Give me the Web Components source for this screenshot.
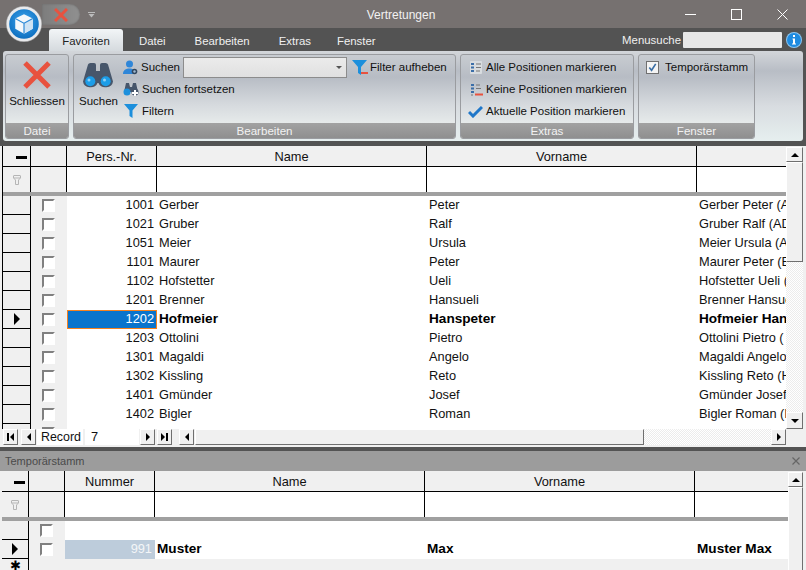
<!DOCTYPE html>
<html>
<head>
<meta charset="utf-8">
<title>Vertretungen</title>
<style>
  html, body { margin: 0; height: 100%; overflow: hidden; background: #535353; }
  body { font: 11.4px 'Liberation Sans', sans-serif; color: #111; }
</style>
</head>
<body>
<app-window>
  <title-bar slot="top"></title-bar>
  <ribbon-tabs slot="top"></ribbon-tabs>
  <ribbon-bar slot="top"></ribbon-bar>
  <data-grid id="main" indicator="28" check="36" first="90" first-title="Pers.-Nr." tail="89" bar="17"></data-grid>
  <sub-panel caption="Temporärstamm">
    <data-grid id="temp" indicator="27" check="36" first="90" first-title="Nummer" tail="93" bar="15" no-nav></data-grid>
  </sub-panel>
</app-window>

<script>
/**
 * Small helper, creates a component from a template string.
 */
const define = (name, html, Base = HTMLElement) => {
  const template = document.createElement('template')
  template.innerHTML = html
  customElements.define(name, class extends Base {
    constructor () {
      super()
      this.attachShadow({ mode: 'open' }).appendChild(template.content.cloneNode(true))
    }
  })
}

define('app-window', `
  <style>
    :host { display: flex; flex-direction: column; width: 806px; height: 570px; overflow: hidden; background: #f0f0f0; }
    .top { flex: none; background: #535353; }
  </style>
  <div class="top"><slot name="top"></slot></div>
  <slot></slot>
`)

define('title-bar', `
  <style>
    :host { display: flex; align-items: flex-start; height: 28px; background: #767170; color: #fff; position: relative; font-size: 12px; }
    .orb { position: absolute; left: 6px; top: 6px; z-index: 2; }
    .pill { width: 38px; height: 21px; margin: 4px 0 0 42px; background: linear-gradient(90deg, #7d7d7d, #909090); border-radius: 0 11px 11px 0; display: flex; align-items: center; justify-content: center; box-shadow: inset 0 0 2px #666; }
    .more { margin: 12px 0 0 8px; width: 7px; display: flex; }
    .cap { position: absolute; left: 0; width: 802px; top: 8px; text-align: center; color: #f2f2f2; }
    .ctl { position: absolute; right: 1px; top: 0; display: flex; }
    .ctl span { width: 46px; height: 28px; display: flex; align-items: center; justify-content: center; }
  </style>
  <svg class="orb" width="36" height="36" viewBox="0 0 37 37">
    <defs><radialGradient id="b" cx=".5" cy=".4" r=".6"><stop offset="0" stop-color="#3fa6ee"/><stop offset="1" stop-color="#0d6fc0"/></radialGradient></defs>
    <circle cx="18.500" cy="18.500" r="18.300" fill="#e9eaec" stroke="#8a8a8a" stroke-width=".5"/>
    <circle cx="18.500" cy="18.500" r="15.200" fill="url(#b)"/>
    <path d="M18.500 8.500l9 4.400v10.600l-9 5-9-5V12.900z" fill="#f4f8fb"/>
    <path d="M18.500 17.800l9-4.900v10.600l-9 5z" fill="#cfe3f3"/>
    <path d="M9.500 12.900l9 4.900v10.700M18.500 17.800l9-4.900" fill="none" stroke="#2e8ad6" stroke-width="1.200"/>
  </svg>
  <div class="pill">
    <svg width="14" height="14" viewBox="0 0 14 14"><path d="M1 1l12 12M13 1L1 13" stroke="#e8523f" stroke-width="3"/></svg>
  </div>
  <div class="more">
    <svg width="7" height="6" viewBox="0 0 7 6"><path d="M0 .5h7" stroke="#bbb"/><path d="M.5 2h6L3.500 5.500z" fill="#bbb"/></svg>
  </div>
  <div class="cap">Vertretungen</div>
  <div class="ctl">
    <span><svg width="11" height="11"><path d="M0 5.500h11" stroke="#fff"/></svg></span>
    <span><svg width="11" height="11"><rect x=".5" y=".5" width="10" height="10" fill="none" stroke="#fff"/></svg></span>
    <span><svg width="11" height="11"><path d="M.5.500l10 10M10.500.500l-10 10" stroke="#fff"/></svg></span>
  </div>
`)

define('ribbon-tabs', `
  <style>
    :host { display: flex; align-items: flex-end; height: 23px; background: #535353; color: #f0f0f0; padding-left: 49px; }
    .tab { width: 74px; height: 22px; line-height: 24px; text-align: center; color: #222; margin-right: 16px; background: linear-gradient(#f2f5f7, #d5dade); border-radius: 3px 3px 0 0; }
    .plain { margin-right: 29px; line-height: 26px; height: 23px; }
    .plain.tight { margin-right: 26px; }
    .right { margin-left: auto; display: flex; align-items: center; height: 23px; margin-right: 4px; }
    .find { width: 99px; height: 16px; margin: 0 4px 0 2px; background: #e8e8e8; border-radius: 1px; }
  </style>
  <div class="tab">Favoriten</div>
  <div class="plain">Datei</div>
  <div class="plain">Bearbeiten</div>
  <div class="plain tight">Extras</div>
  <div class="plain">Fenster</div>
  <div class="right">
    Menusuche<div class="find"></div>
    <svg width="16" height="16" viewBox="0 0 16 16"><circle cx="8" cy="8" r="8" fill="#8cc7f2"/><circle cx="8" cy="8" r="7" fill="#1f8be0"/><rect x="7" y="3" width="2" height="2" fill="#fff"/><path d="M6.500 6.500H9v5h1v1H6v-1h1v-4h-.5z" fill="#fff"/></svg>
  </div>
`)

define('ribbon-group', `
  <style>
    :host { display: flex; flex-direction: column; flex: none; box-sizing: border-box; height: 85px; border: 1px solid #9a9ca0; border-radius: 3px; overflow: hidden; margin-right: 4px; background: linear-gradient(#c8ccd1 0, #b7bcc4 22px, #d6dade 50px, #e6eaea 68px); }
    .body { flex: 1; display: flex; min-height: 0; }
    .foot { flex: none; height: 15px; line-height: 15px; text-align: center; color: #f2f2f2; background: linear-gradient(#a2a2a2, #8f8f8f); font-size: 11.600px; }
  </style>
  <div class="body"><slot></slot></div>
  <div class="foot"><slot name="foot"></slot></div>
`)

define('ribbon-bar', `
  <style>
    :host { display: block; height: 95px; font-size: 11.500px; }
    .bar { display: flex; height: 90px; box-sizing: border-box; margin: 0 3px 5px 3px; padding: 3px 0 0 2px; border-radius: 3px; background: linear-gradient(#d3d6da 0, #b8bdc5 20px, #d8dce0 55px, #e6efef 90px); }
    .big { display: flex; flex-direction: column; align-items: center; text-align: center; justify-content: flex-end; padding-bottom: 16px; }
    .row { display: flex; align-items: center; height: 22px; white-space: nowrap; }
    .col { display: flex; flex-direction: column; padding-top: 1px; }
    .row svg { flex: none; }
    .label { width: 42px; }
    .combo { width: 164px; height: 21px; box-sizing: border-box; border: 1px solid #8c8c8c; background: linear-gradient(#ebebeb, #e0e0e0); display: flex; justify-content: flex-end; align-items: center; padding-right: 4px; }
    .combo i { border: 3px solid transparent; border-top: 3px solid #555; border-bottom: 0; }
    .check { width: 13px; height: 13px; box-sizing: border-box; border: 1px solid #707070; background: #f4f4f4; margin-right: 6px; display: flex; }
  </style>
  <div class="bar">
    <ribbon-group style="width:64px">
      <div class="big" style="width:62px">
        <svg width="30" height="30" viewBox="0 0 30 30" style="margin-bottom:5px"><path d="M3 3l24 24M27 3L3 27" stroke="#e8523f" stroke-width="5"/></svg>
        Schliessen
      </div>
      <span slot="foot">Datei</span>
    </ribbon-group>
    <ribbon-group style="width:383px">
      <div class="big" style="width:49px">
        <svg width="30" height="25" viewBox="0 0 30 25" style="margin:0 2px 7px 0">
          <path d="M5 1.500Q5.500 0 7.500 0H11Q13 0 13 2V8H17V2Q17 0 19 0H22.500Q24.500 0 25 1.500L30 18.500A7.500 6.500 0 0 1 15.500 20H14.500A7.500 6.500 0 0 1 0 18.500Z" fill="#47566b"/>
          <circle cx="7.300" cy="18.300" r="5" fill="#1c9de8"/><circle cx="22.700" cy="18.300" r="5" fill="#1c9de8"/>
          <circle cx="6" cy="17" r="1.500" fill="#8fd0f6"/><circle cx="21.500" cy="17" r="1.500" fill="#8fd0f6"/>
        </svg>
        Suchen
      </div>
      <div class="col">
        <div class="row">
          <svg width="15" height="15" viewBox="0 0 15 15" style="margin-right:3px"><circle cx="6.500" cy="4" r="3.500" fill="#2f86d8"/><path d="M0 14c0-4 3-5.500 6.500-5.500S12 10 12 14z" fill="#2f86d8"/><circle cx="11.500" cy="11.500" r="2.800" fill="#33485f"/><circle cx="11.500" cy="11.500" r="1.200" fill="#9fb8cf"/></svg>
          <span class="label">Suchen</span>
          <div class="combo"><i></i></div>
        </div>
        <div class="row">
          <svg width="16" height="15" viewBox="0 0 16 15" style="margin-right:3px"><path d="M3 1h3l1 4h2l1-4h3l2 9H1z" fill="#47566b"/><circle cx="4" cy="10" r="3.500" fill="#1c8fdc"/><circle cx="12" cy="10" r="3.500" fill="#47566b"/><path d="M12 8v6M9 11h6" stroke="#fff" stroke-width="2"/></svg>Suchen fortsetzen
        </div>
        <div class="row">
          <svg width="16" height="16" viewBox="0 0 16 16" style="margin-right:3px"><path d="M1 1h14L9.500 7.500V15l-3-2V7.500z" fill="#1c8fdc"/></svg>Filtern
        </div>
      </div>
      <div class="col" style="margin-left:5px">
        <div class="row">
          <svg width="16" height="17" viewBox="0 0 16 17" style="margin-right:2px"><path d="M0 1h15L9 8v8l-3-2V8z" fill="#1c8fdc"/><path d="M9 14h7" stroke="#e8523f" stroke-width="2"/></svg>Filter aufheben
        </div>
      </div>
      <span slot="foot">Bearbeiten</span>
    </ribbon-group>
    <ribbon-group style="width:174px">
      <div class="col" style="padding-left:7px">
        <div class="row"><svg width="15" height="15" viewBox="0 0 15 15" style="margin-right:3px"><rect x="2" y="1" width="12" height="13" rx="1" fill="#d8dcdf"/><path d="M3 4h3M3 7.500h3M3 11h3" stroke="#3b6ea8" stroke-width="2"/><path d="M8 4h5M8 7.500h5M8 11h4" stroke="#777"/></svg>Alle Positionen markieren</div>
        <div class="row"><svg width="15" height="15" viewBox="0 0 15 15" style="margin-right:3px"><path d="M3 3h3M3 6.500h3M3 10h3" stroke="#3b6ea8" stroke-width="2"/><path d="M8 3h4M8 6.500h5M3 13h2" stroke="#777"/><path d="M7 12.500h8" stroke="#e8523f" stroke-width="2"/></svg>Keine Positionen markieren</div>
        <div class="row"><svg width="15" height="14" viewBox="0 0 15 14" style="margin-right:3px"><path d="M1 8l4 4 9-9" fill="none" stroke="#1f77c9" stroke-width="3"/></svg>Aktuelle Position markieren</div>
      </div>
      <span slot="foot">Extras</span>
    </ribbon-group>
    <ribbon-group style="width:117px">
      <div class="col" style="padding-left:7px">
        <div class="row"><span class="check"><svg width="11" height="11" viewBox="0 0 12 12"><path d="M2.500 6l2.500 3L9.500 2" fill="none" stroke="#3a6ea5" stroke-width="1.800"/></svg></span>Temporärstamm</div>
      </div>
      <span slot="foot">Fenster</span>
    </ribbon-group>
  </div>
`)

define('grid-check', `
  <style>
    :host { display: block; box-sizing: border-box; width: 13px; height: 13px; border: 2px solid; border-color: #808080 #fff #fff #808080; background: #fff; }
  </style>
`)

define('scroll-btn', `
  <style>
    :host { display: flex; align-items: center; justify-content: center; flex: none; box-sizing: border-box; background: #f0f0f0; border: 1px solid; border-color: #fff #6f6f6f #6f6f6f #fff; position: relative; }
    i { display: block; width: 0; height: 0; border: 4px solid transparent; }
    :host([dir-to=up]) i { border-width: 4px 4px; border-top: 0; border-bottom-color: #000; }
    :host([dir-to=down]) i { border-width: 4px 4px; border-bottom: 0; border-top-color: #000; }
    :host([dir-to=left]) i { border-left: 0; border-right-color: #000; }
    :host([dir-to=right]) i { border-right: 0; border-left-color: #000; }
    :host([end=left]) i { margin-left: 3px; }
    :host([end=right]) i { margin-right: 3px; }
    b { display: none; position: absolute; top: 3px; width: 2px; height: 8px; background: #000; }
    :host([end=left]) b { display: block; left: 3px; }
    :host([end=right]) b { display: block; right: 3px; }
  </style>
  <b></b><i></i>
`)

const people = [
  ['1001', 'Gerber', 'Peter', 'Gerber Peter (A'],
  ['1021', 'Gruber', 'Ralf', 'Gruber Ralf (AD'],
  ['1051', 'Meier', 'Ursula', 'Meier Ursula (A'],
  ['1101', 'Maurer', 'Peter', 'Maurer Peter (E'],
  ['1102', 'Hofstetter', 'Ueli', 'Hofstetter Ueli ('],
  ['1201', 'Brenner', 'Hansueli', 'Brenner Hansue'],
  ['1202', 'Hofmeier', 'Hanspeter', 'Hofmeier Han', 'current'],
  ['1203', 'Ottolini', 'Pietro', 'Ottolini Pietro ('],
  ['1301', 'Magaldi', 'Angelo', 'Magaldi Angelo'],
  ['1302', 'Kissling', 'Reto', 'Kissling Reto (H'],
  ['1401', 'Gmünder', 'Josef', 'Gmünder Josef'],
  ['1402', 'Bigler', 'Roman', 'Bigler Roman (I'],
  ['', '', '', '']
]

const tempRows = [
  ['', '', '', ''],
  ['991', 'Muster', 'Max', 'Muster Max', 'marked'],
  ['', '', '', '', 'new']
]

/**
 * A table with header, filter row, records and scroll bars.
 */
class DataGrid extends HTMLElement {
  connectedCallback () {
    const isMain = this.id === 'main'
    const rows = isMain ? people : tempRows
    const num = (n) => Number(this.getAttribute(n))
    const cols = `${num('indicator')}px ${num('check')}px ${num('first')}px 270px 270px ${num('tail')}px`

    const rowHtml = rows.map((r) => {
      const arrow = r[4] === 'current' || r[4] === 'marked'
      const mark = r[4] === 'new' ? '<span class="star">✱</span>' : arrow ? '<i class="arrow"></i>' : ''
      const cls = r[4] || ''
      const check = r[4] === 'new' ? '' : '<grid-check></grid-check>'
      return `<div class="ind">${mark}</div>
        <div class="chk">${check}</div>
        <div class="c num ${cls}">${r[0]}</div>
        <div class="c ${cls}">${r[1]}</div>
        <div class="c ${cls}">${r[2]}</div>
        <div class="c ${cls}">${r[3]}</div>`
    }).join('')

    const nav = this.hasAttribute('no-nav') ? '' : `
      <div class="nav">
        <scroll-btn dir-to="left" end="left" style="margin-right:3px"></scroll-btn>
        <scroll-btn dir-to="left" style="margin-right:1px"></scroll-btn>
        <span class="rec">Record</span>
        <span class="pos">7</span>
        <scroll-btn dir-to="right" style="margin-right:2px"></scroll-btn>
        <scroll-btn dir-to="right" end="right" style="margin-right:7px"></scroll-btn>
        <scroll-btn dir-to="left" style="margin-right:1px"></scroll-btn>
        <div class="thumb"></div>
        <div class="track"></div>
        <scroll-btn dir-to="right"></scroll-btn>
      </div>`

    this.attachShadow({ mode: 'open' }).innerHTML = `
      <style>
        :host { display: flex; flex: 1; min-height: 0; background: #f0f0f0; padding: 0 3px 0 2px; font: 12.800px 'Liberation Sans', sans-serif; color: #111; --h: 19px; }
        .wrap { flex: 1; display: flex; min-width: 0; flex-direction: column; }
        .upper { flex: 1; display: flex; min-height: 0; }
        .table { flex: none; width: ${num('indicator') + num('check') + num('first') + 540 + num('tail')}px; overflow: hidden; background: #f0f0f0; }
        .table.lined { border-left: 1px solid #000; }
        .grid { display: grid; grid-template-columns: ${cols}; }
        .head { height: 21px; line-height: 21px; text-align: center; background: #f0f0f0; border-right: 1px solid #000; border-bottom: 1px solid #000; box-sizing: border-box; }
        .head:nth-child(6), .filter:nth-child(12) { border-right: 0; }
        .filter { height: 25px; background: #fff; border-right: 1px solid #000; box-sizing: border-box; }
        .filter.g { background: #f0f0f0; display: flex; align-items: center; justify-content: center; }
        .minus { width: 11px; height: 3px; background: #000; margin: 10px 0 0 ${isMain ? 13 : 12}px; }
        .sep { height: 4px; background: #a0a0a0; }
        .ind { height: var(--h); box-sizing: border-box; background: #f0f0f0; border-right: 1px solid #000; border-bottom: 1px solid #000; display: flex; align-items: center; justify-content: center; }
        .chk { height: var(--h); background: #f0f0f0; display: flex; align-items: center; justify-content: center; padding-right: 2px; box-sizing: border-box; }
        .c { height: var(--h); line-height: 17px; background: #fff; padding: 0 0 0 2px; box-sizing: border-box; white-space: nowrap; overflow: hidden; }
        .num { text-align: right; padding: 0 3px 0 0; }
        .current, .marked { font-weight: bold; font-size: 13.600px; color: #000; }
        .num.current { background: #0a74cc; color: #fff; font-weight: normal; font-size: 12.800px; outline: 1px solid #f58220; outline-offset: -1px; }
        .num.marked { background: #bdccdb; color: #f4f6f8; font-weight: normal; font-size: 12.800px; }
        .c.new { background: #f0f0f0; }
        .arrow { width: 0; height: 0; border: 6px solid transparent; border-right: 0; border-left: 6px solid #000; }
        .star { font-size: 13px; line-height: 1; color: #000; margin-bottom: 6px; }
        .vbar { width: ${num('bar')}px; flex: none; display: flex; flex-direction: column; background: #f0f0f0; }
        .vbar scroll-btn { height: 15px; margin-top: 1px; }
        .vbar scroll-btn:last-child { height: 17px; margin: 0; }
        .vthumb { height: 100px; flex: none; box-sizing: border-box; background: #f0f0f0; border: 1px solid; border-color: #fff #6f6f6f #6f6f6f #fff; }
        .vtrack { flex: 1; background-image: repeating-conic-gradient(#fff 0 25%, #ececec 0 50%); background-size: 2px 2px; }
        .nav { flex: none; height: 18px; display: flex; align-items: flex-start; background: #f0f0f0; padding-left: 1px; margin-right: 17px; }
        .nav scroll-btn { width: 15px; height: 16px; }
        .rec { width: 46px; height: 16px; background: #fff; line-height: 16px; padding-left: 4px; box-sizing: border-box; margin-right: 2px; font-size: 12.400px; }
        .pos { width: 54px; height: 16px; background: #fff; line-height: 16px; padding-left: 6px; box-sizing: border-box; margin-right: 1px; }
        .thumb { width: 449px; height: 16px; box-sizing: border-box; background: #f0f0f0; border: 1px solid; border-color: #fff #6f6f6f #6f6f6f #fff; }
        .track { flex: 1; height: 16px; background-image: repeating-conic-gradient(#fff 0 25%, #ececec 0 50%); background-size: 2px 2px; }
      </style>
      <div class="wrap">
        <div class="upper">
          <div class="table ${isMain ? 'lined' : ''}">
            <div class="grid">
              <div class="head"><div class="minus"></div></div>
              <div class="head"></div>
              <div class="head">${this.getAttribute('first-title')}</div>
              <div class="head">Name</div>
              <div class="head">Vorname</div>
              <div class="head"></div>
              <div class="filter g">
                <svg width="8" height="10" viewBox="0 0 8 10"><path d="M1 .5h6q.5 0 .5.500v2L5.500 5v4.500h-3V5L.5 3V1q0-.5.500-.5zM1 3h6" fill="none" stroke="#b5b5b5"/></svg>
              </div>
              <div class="filter g"></div>
              <div class="filter"></div>
              <div class="filter"></div>
              <div class="filter"></div>
              <div class="filter"></div>
            </div>
            <div class="sep"></div>
            <div class="grid">${rowHtml}</div>
          </div>
          <div class="vbar">
            <scroll-btn dir-to="up"></scroll-btn>
            <div class="vthumb"></div>
            <div class="vtrack"></div>
            <scroll-btn dir-to="down"></scroll-btn>
          </div>
        </div>
        ${nav}
      </div>
    `
  }
}
customElements.define('data-grid', DataGrid)

define('sub-panel', `
  <style>
    :host { display: flex; flex-direction: column; flex: none; box-sizing: border-box; height: 123px; border-top: 4px solid #535353; background: #f0f0f0; }
    .cap { flex: none; height: 20px; display: flex; align-items: center; justify-content: space-between; padding: 0 6px 0 5px; background: #9c9c9c; color: #4a4a4a; font-size: 11px; box-sizing: border-box; }
  </style>
  <div class="cap"><span id="t"></span>
    <svg width="8" height="8"><path d="M.5.500l7 7M7.500.500l-7 7" stroke="#666" stroke-width="1.200"/></svg>
  </div>
  <slot></slot>
`, class extends HTMLElement {
  connectedCallback () {
    this.shadowRoot.getElementById('t').textContent = this.getAttribute('caption')
  }
})
</script>
</body>
</html>
